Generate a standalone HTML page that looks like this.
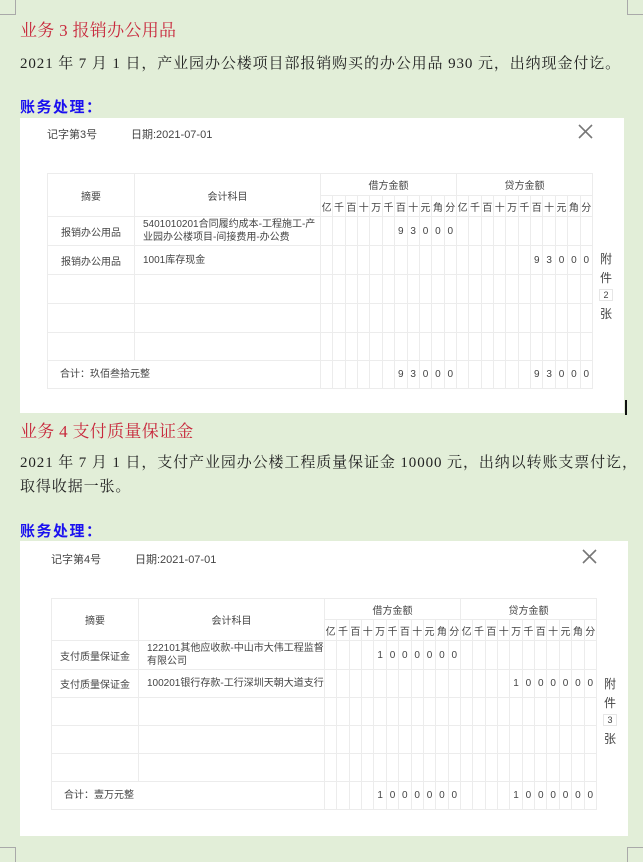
<!DOCTYPE html>
<html><head><meta charset="utf-8">
<style>
*{margin:0;padding:0;box-sizing:border-box}
body{width:643px;height:857px;background:#e2eed8;position:relative;overflow:hidden;font-family:"Liberation Serif","Noto Serif CJK SC",serif;}
.a{position:absolute;white-space:nowrap}
.h{color:#c8283c;font-size:17px;letter-spacing:0.3px}
.p{color:#222;font-size:15px;letter-spacing:0.9px}
.b{color:#1a10f0;font-size:15px;font-weight:bold;letter-spacing:1.5px;font-family:"Liberation Serif","Noto Sans CJK SC",sans-serif}
.panel{position:absolute;background:#fff}
.s{font-family:"Liberation Sans","Noto Sans CJK SC",sans-serif;color:#444}
table{position:absolute;border-collapse:collapse;table-layout:fixed;font-family:"Liberation Sans","Noto Sans CJK SC",sans-serif;font-size:10px;color:#444}
td{border:1px solid #ececec;text-align:center;padding:0;overflow:hidden;white-space:nowrap}
td.l{text-align:left;padding-left:8px;line-height:13px;white-space:normal}
col.lb{border-right:1px solid #cde8f6}
col.db{border-right:1px solid #a9d8f3}
col.rd{border-right:1px solid #f1c6c6}
.d{font-size:10px}
.side{position:absolute;font-family:"Liberation Sans","Noto Sans CJK SC",sans-serif;font-size:12px;color:#444;text-align:center;width:14px;line-height:19px}
.side span{display:block;width:14px;height:12px;border:1px solid #e6e6e6;font-size:9px;line-height:10px;margin:1px 0 4px}
.corner{position:absolute;width:16px;height:15px;border-color:#a9a9a9;border-style:solid;border-width:0}
</style></head><body>
<div class="corner" style="left:0;top:0;border-right-width:1px;border-bottom-width:1px"></div>
<div class="corner" style="left:627px;top:0;border-left-width:1px;border-bottom-width:1px"></div>
<div class="corner" style="left:0;top:847px;border-right-width:1px;border-top-width:1px"></div>
<div class="corner" style="left:627px;top:847px;border-left-width:1px;border-top-width:1px"></div>

<div class="a h" style="left:20px;top:16px">业务 3 报销办公用品</div>
<div class="a p" style="left:20px;top:52px">2021 年 7 月 1 日，产业园办公楼项目部报销购买的办公用品 930 元，出纳现金付讫。</div>
<div class="a b" style="left:20px;top:96px">账务处理：</div>

<div class="panel" style="left:20px;top:118px;width:604px;height:295px"></div>
<div class="a s" style="left:47px;top:126px;font-size:11px">记字第3号</div>
<div class="a s" style="left:131px;top:126px;font-size:11px">日期:2021-07-01</div>
<svg class="a" style="left:578px;top:124px" width="15" height="15"><path d="M1 1L14 14M14 1L1 14" stroke="#777" stroke-width="1.6"/></svg>

<table style="left:47px;top:173px;width:546px">
<colgroup><col style="width:87px"><col style="width:186px"><col><col><col class="lb"><col><col><col class="db"><col><col><col class="rd"><col><col><col><col><col class="lb"><col><col><col class="db"><col><col><col class="rd"><col><col></colgroup>
<tr style="height:22px"><td rowspan="2">摘要</td><td rowspan="2">会计科目</td><td colspan="11">借方金额</td><td colspan="11">贷方金额</td></tr>
<tr style="height:21px"><td>亿</td><td>千</td><td>百</td><td>十</td><td>万</td><td>千</td><td>百</td><td>十</td><td>元</td><td>角</td><td>分</td><td>亿</td><td>千</td><td>百</td><td>十</td><td>万</td><td>千</td><td>百</td><td>十</td><td>元</td><td>角</td><td>分</td></tr>
<tr style="height:29px" class="d"><td>报销办公用品</td><td class="l">5401010201合同履约成本-工程施工-产业园办公楼项目-间接费用-办公费</td><td></td><td></td><td></td><td></td><td></td><td></td><td>9</td><td>3</td><td>0</td><td>0</td><td>0</td><td></td><td></td><td></td><td></td><td></td><td></td><td></td><td></td><td></td><td></td><td></td></tr>
<tr style="height:29px" class="d"><td>报销办公用品</td><td class="l">1001库存现金</td><td></td><td></td><td></td><td></td><td></td><td></td><td></td><td></td><td></td><td></td><td></td><td></td><td></td><td></td><td></td><td></td><td></td><td>9</td><td>3</td><td>0</td><td>0</td><td>0</td></tr>
<tr style="height:29px"><td></td><td></td><td></td><td></td><td></td><td></td><td></td><td></td><td></td><td></td><td></td><td></td><td></td><td></td><td></td><td></td><td></td><td></td><td></td><td></td><td></td><td></td><td></td><td></td></tr>
<tr style="height:29px"><td></td><td></td><td></td><td></td><td></td><td></td><td></td><td></td><td></td><td></td><td></td><td></td><td></td><td></td><td></td><td></td><td></td><td></td><td></td><td></td><td></td><td></td><td></td><td></td></tr>
<tr style="height:28px"><td></td><td></td><td></td><td></td><td></td><td></td><td></td><td></td><td></td><td></td><td></td><td></td><td></td><td></td><td></td><td></td><td></td><td></td><td></td><td></td><td></td><td></td><td></td><td></td></tr>
<tr style="height:28px" class="d"><td colspan="2" class="l" style="padding-left:12px">合计：玖佰叁拾元整</td><td></td><td></td><td></td><td></td><td></td><td></td><td>9</td><td>3</td><td>0</td><td>0</td><td>0</td><td></td><td></td><td></td><td></td><td></td><td></td><td>9</td><td>3</td><td>0</td><td>0</td><td>0</td></tr>
</table>
<div class="side" style="left:599px;top:250px">附<br>件<span>2</span>张</div>

<div class="a" style="left:625px;top:400px;width:2px;height:15px;background:#111"></div>

<div class="a h" style="left:20px;top:417px">业务 4 支付质量保证金</div>
<div class="a p" style="left:20px;top:451px">2021 年 7 月 1 日，支付产业园办公楼工程质量保证金 10000 元，出纳以转账支票付讫，</div>
<div class="a p" style="left:20px;top:475px">取得收据一张。</div>
<div class="a b" style="left:20px;top:520px">账务处理：</div>

<div class="panel" style="left:20px;top:541px;width:608px;height:295px"></div>
<div class="a s" style="left:51px;top:551px;font-size:11px">记字第4号</div>
<div class="a s" style="left:135px;top:551px;font-size:11px">日期:2021-07-01</div>
<svg class="a" style="left:582px;top:549px" width="15" height="15"><path d="M1 1L14 14M14 1L1 14" stroke="#777" stroke-width="1.6"/></svg>

<table style="left:51px;top:598px;width:546px">
<colgroup><col style="width:87px"><col style="width:186px"><col><col><col class="lb"><col><col><col class="db"><col><col><col class="rd"><col><col><col><col><col class="lb"><col><col><col class="db"><col><col><col class="rd"><col><col></colgroup>
<tr style="height:21px"><td rowspan="2">摘要</td><td rowspan="2">会计科目</td><td colspan="11">借方金额</td><td colspan="11">贷方金额</td></tr>
<tr style="height:21px"><td>亿</td><td>千</td><td>百</td><td>十</td><td>万</td><td>千</td><td>百</td><td>十</td><td>元</td><td>角</td><td>分</td><td>亿</td><td>千</td><td>百</td><td>十</td><td>万</td><td>千</td><td>百</td><td>十</td><td>元</td><td>角</td><td>分</td></tr>
<tr style="height:29px" class="d"><td>支付质量保证金</td><td class="l">122101其他应收款-中山市大伟工程监督有限公司</td><td></td><td></td><td></td><td></td><td>1</td><td>0</td><td>0</td><td>0</td><td>0</td><td>0</td><td>0</td><td></td><td></td><td></td><td></td><td></td><td></td><td></td><td></td><td></td><td></td><td></td></tr>
<tr style="height:28px" class="d"><td>支付质量保证金</td><td class="l">100201银行存款-工行深圳天朝大道支行</td><td></td><td></td><td></td><td></td><td></td><td></td><td></td><td></td><td></td><td></td><td></td><td></td><td></td><td></td><td></td><td>1</td><td>0</td><td>0</td><td>0</td><td>0</td><td>0</td><td>0</td></tr>
<tr style="height:28px"><td></td><td></td><td></td><td></td><td></td><td></td><td></td><td></td><td></td><td></td><td></td><td></td><td></td><td></td><td></td><td></td><td></td><td></td><td></td><td></td><td></td><td></td><td></td><td></td></tr>
<tr style="height:28px"><td></td><td></td><td></td><td></td><td></td><td></td><td></td><td></td><td></td><td></td><td></td><td></td><td></td><td></td><td></td><td></td><td></td><td></td><td></td><td></td><td></td><td></td><td></td><td></td></tr>
<tr style="height:28px"><td></td><td></td><td></td><td></td><td></td><td></td><td></td><td></td><td></td><td></td><td></td><td></td><td></td><td></td><td></td><td></td><td></td><td></td><td></td><td></td><td></td><td></td><td></td><td></td></tr>
<tr style="height:28px" class="d"><td colspan="2" class="l" style="padding-left:12px">合计：壹万元整</td><td></td><td></td><td></td><td></td><td>1</td><td>0</td><td>0</td><td>0</td><td>0</td><td>0</td><td>0</td><td></td><td></td><td></td><td></td><td>1</td><td>0</td><td>0</td><td>0</td><td>0</td><td>0</td><td>0</td></tr>
</table>
<div class="side" style="left:603px;top:675px">附<br>件<span>3</span>张</div>
</body></html>
